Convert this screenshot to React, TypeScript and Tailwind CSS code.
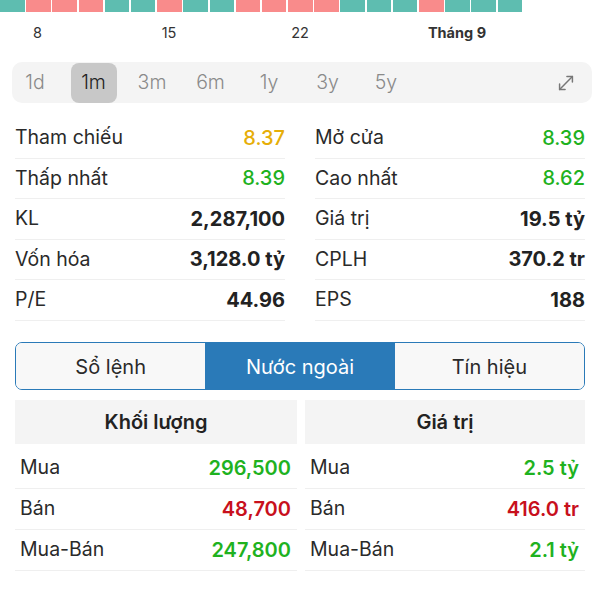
import React from "react";

const blocks = "tpppttpttpppptttpttt".split("");

const stats: [string, string, string, string, string, string][] = [
  ["Tham chiếu", "8.37", "text-[#e6ae08] font-medium", "Mở cửa", "8.39", "text-[#1fb21f] font-medium"],
  ["Thấp nhất", "8.39", "text-[#1fb21f] font-medium", "Cao nhất", "8.62", "text-[#1fb21f] font-medium"],
  ["KL", "2,287,100", "text-[#222] font-bold", "Giá trị", "19.5 tỷ", "text-[#222] font-bold"],
  ["Vốn hóa", "3,128.0 tỷ", "text-[#222] font-bold", "CPLH", "370.2 tr", "text-[#222] font-bold"],
  ["P/E", "44.96", "text-[#222] font-bold", "EPS", "188", "text-[#222] font-bold"],
];

const periods = ["1d", "1m", "3m", "6m", "1y", "3y", "5y"];

function Panel({ title, rows }: { title: string; rows: [string, string, string][] }) {
  return (
    <div className="flex flex-col">
      <div className="h-[44px] bg-[#f4f4f4] flex items-center justify-center text-[20px] font-semibold text-[#222]">
        {title}
      </div>
      <div className="mt-[4px] flex flex-col">
        {rows.map(([l, v, c]) => (
          <div key={l} className="h-[41px] flex items-center justify-between pl-[5px] pr-[6px] border-b border-[#efefef]">
            <span className="text-[19.5px] text-[#2a2a2a]">{l}</span>
            <span className={`text-[20px] font-semibold ${c}`}>{v}</span>
          </div>
        ))}
      </div>
    </div>
  );
}

export default function App() {
  return (
    <div
      className="w-[600px] h-[600px] bg-white overflow-hidden flex flex-col"
      style={{ fontFamily: "Inter, 'Noto Sans', sans-serif" }}
    >
      {/* candle strip */}
      <div className="flex gap-[1.7px] h-[12px]">
        {blocks.map((b, i) => (
          <div key={i} className={`w-[24.5px] h-full ${b === "t" ? "bg-[#5ebdb0]" : "bg-[#f98b8b]"}`} />
        ))}
      </div>
      {/* date labels */}
      <div className="h-[41px] flex items-center text-[14.5px] text-[#333]">
        <span className="ml-[7.5px] w-[60px] text-center">8</span>
        <span className="ml-[71.5px] w-[60px] text-center">15</span>
        <span className="ml-[71px] w-[60px] text-center">22</span>
        <span className="ml-[92px] w-[70px] text-center font-bold">Tháng 9</span>
      </div>
      {/* period bar */}
      <div className="mt-[9px] ml-[12px] mr-[8px] h-[41px] rounded-[10px] bg-[#f4f4f4] flex items-center">
        <div className="flex gap-[12.5px] items-center">
          {periods.map((p) => (
            <div
              key={p}
              className={`w-[46px] h-[40px] flex items-center justify-center text-[19.5px] font-light rounded-[8px] ${
                p === "1m" ? "bg-[#c8c8c8] text-[#222]" : "text-[#8a8a8a]"
              }`}
            >
              {p}
            </div>
          ))}
        </div>
        <div className="ml-auto mr-[15px] text-[#777]">
          <svg width="22" height="22" viewBox="0 0 24 24" fill="none" stroke="currentColor" strokeWidth="1.6" strokeLinecap="round" strokeLinejoin="round">
            <path d="M11 19H5v-6" />
            <path d="M13 5h6v6" />
            <path d="M19 5 5 19" />
          </svg>
        </div>
      </div>
      {/* stats */}
      <div className="mt-[15px] ml-[15px] mr-[15px] grid grid-cols-2 gap-x-[30px]">
        {stats.map(([l1, v1, c1, l2, v2, c2]) => (
          <React.Fragment key={l1}>
            <div className="h-[40.5px] flex items-center justify-between border-b border-[#efefef]">
              <span className="text-[19.5px] text-[#2a2a2a]">{l1}</span>
              <span className={`text-[20px] ${c1}`}>{v1}</span>
            </div>
            <div className="h-[40.5px] flex items-center justify-between border-b border-[#efefef]">
              <span className="text-[19.5px] text-[#2a2a2a]">{l2}</span>
              <span className={`text-[20px] ${c2}`}>{v2}</span>
            </div>
          </React.Fragment>
        ))}
      </div>
      {/* tabs */}
      <div className="mt-[21px] ml-[15px] mr-[15px] h-[48px] border-[1.5px] border-[#2a7ab8] rounded-[7px] overflow-hidden grid grid-cols-3">
        <div className="bg-[#f8f8f8] flex items-center justify-center text-[20px] text-[#2a2a2a] pt-[2px]">Sổ lệnh</div>
        <div className="bg-[#2a7ab8] flex items-center justify-center text-[20px] text-white pt-[2px]">Nước ngoài</div>
        <div className="bg-[#f8f8f8] flex items-center justify-center text-[20px] text-[#2a2a2a] pt-[2px]">Tín hiệu</div>
      </div>
      {/* foreign table */}
      <div className="mt-[10px] ml-[15px] mr-[15px] grid grid-cols-[282px_1fr] gap-x-[8px]">
        <Panel
          title="Khối lượng"
          rows={[
            ["Mua", "296,500", "text-[#1fb21f]"],
            ["Bán", "48,700", "text-[#c8101c]"],
            ["Mua-Bán", "247,800", "text-[#1fb21f]"],
          ]}
        />
        <Panel
          title="Giá trị"
          rows={[
            ["Mua", "2.5 tỷ", "text-[#1fb21f]"],
            ["Bán", "416.0 tr", "text-[#c8101c]"],
            ["Mua-Bán", "2.1 tỷ", "text-[#1fb21f]"],
          ]}
        />
      </div>
    </div>
  );
}
